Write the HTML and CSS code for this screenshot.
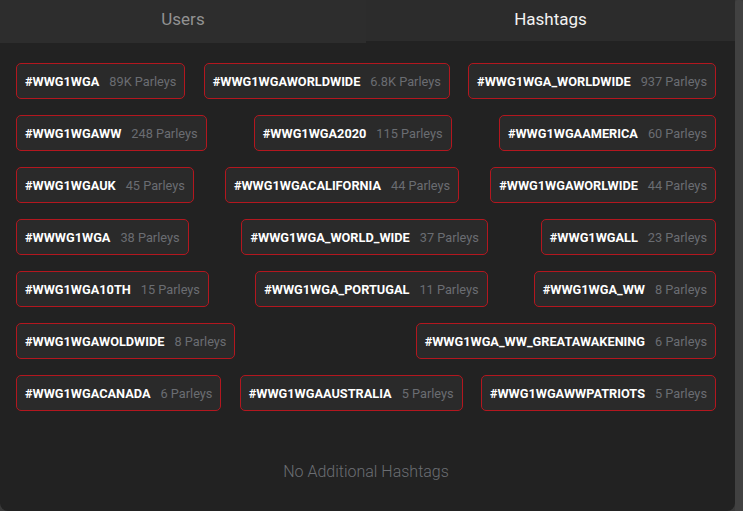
FILE: index.html
```html
<!DOCTYPE html>
<html>
<head>
<meta charset="utf-8">
<link rel="stylesheet" href="styles.css">
</head>
<body>
<div class="frame">
  <div class="panel">
    <div class="tabs">
      <div class="tab">Users</div>
      <div class="tab active">Hashtags</div>
    </div>
    <div class="content">
      <div class="row">
        <div class="tag"><span class="name">#WWG1WGA</span><span class="count">89K Parleys</span></div>
        <div class="tag"><span class="name">#WWG1WGAWORLDWIDE</span><span class="count">6.8K Parleys</span></div>
        <div class="tag"><span class="name">#WWG1WGA_WORLDWIDE</span><span class="count">937 Parleys</span></div>
      </div>
      <div class="row">
        <div class="tag"><span class="name">#WWG1WGAWW</span><span class="count">248 Parleys</span></div>
        <div class="tag"><span class="name">#WWG1WGA2020</span><span class="count">115 Parleys</span></div>
        <div class="tag"><span class="name">#WWG1WGAAMERICA</span><span class="count">60 Parleys</span></div>
      </div>
      <div class="row">
        <div class="tag"><span class="name">#WWG1WGAUK</span><span class="count">45 Parleys</span></div>
        <div class="tag"><span class="name">#WWG1WGACALIFORNIA</span><span class="count">44 Parleys</span></div>
        <div class="tag"><span class="name">#WWG1WGAWORLWIDE</span><span class="count">44 Parleys</span></div>
      </div>
      <div class="row">
        <div class="tag"><span class="name">#WWWG1WGA</span><span class="count">38 Parleys</span></div>
        <div class="tag"><span class="name">#WWG1WGA_WORLD_WIDE</span><span class="count">37 Parleys</span></div>
        <div class="tag"><span class="name">#WWG1WGALL</span><span class="count">23 Parleys</span></div>
      </div>
      <div class="row">
        <div class="tag"><span class="name">#WWG1WGA10TH</span><span class="count">15 Parleys</span></div>
        <div class="tag"><span class="name">#WWG1WGA_PORTUGAL</span><span class="count">11 Parleys</span></div>
        <div class="tag"><span class="name">#WWG1WGA_WW</span><span class="count">8 Parleys</span></div>
      </div>
      <div class="row">
        <div class="tag"><span class="name">#WWG1WGAWOLDWIDE</span><span class="count">8 Parleys</span></div>
        <div class="tag"><span class="name">#WWG1WGA_WW_GREATAWAKENING</span><span class="count">6 Parleys</span></div>
      </div>
      <div class="row">
        <div class="tag"><span class="name">#WWG1WGACANADA</span><span class="count">6 Parleys</span></div>
        <div class="tag"><span class="name">#WWG1WGAAUSTRALIA</span><span class="count">5 Parleys</span></div>
        <div class="tag"><span class="name">#WWG1WGAWWPATRIOTS</span><span class="count">5 Parleys</span></div>
      </div>
      <div class="empty">No Additional Hashtags</div>
    </div>
  </div>
  <div class="scrollbar"></div>
</div>
</body>
</html>
```

FILE: styles.css
```css
html, body {
  margin: 0;
  padding: 0;
  background: #232323;
  height: 511px;
  overflow: hidden;
}

body {
  font-family: Roboto, "Liberation Sans", sans-serif;
}

.frame {
  display: flex;
  width: 743px;
  height: 511px;
  background: #3a3a3a;
}

.panel {
  width: 735px;
  height: 511px;
  background: #222222;
  border-radius: 0 0 8px 8px;
  display: flex;
  flex-direction: column;
}

.scrollbar {
  width: 8px;
  height: 511px;
  background: #414141;
  border-radius: 3px 3px 0 0;
}

.tabs {
  display: flex;
  align-items: flex-start;
  background: #222222;
}

.tab {
  flex: 0 0 366px;
  height: 43px;
  background: #2d2d2d;
  color: #929292;
  font-size: 17px;
  font-weight: 400;
  text-align: center;
  line-height: 38px;
}

.tab.active {
  flex: 1 1 auto;
  height: 41px;
  color: #f2f2f2;
  background: #2c2c2c;
}

.content {
  padding: 22px 19px 0 16px;
  display: flex;
  flex-direction: column;
  gap: 16px;
  margin-top: -2px;
}

.row {
  display: flex;
  justify-content: space-between;
}

.tag {
  box-sizing: border-box;
  height: 36px;
  border: 1px solid #b3171f;
  border-radius: 5px;
  background: #2a2a2a;
  padding: 0 8px;
  display: flex;
  align-items: center;
  gap: 10px;
  font-size: 12.75px;
}

.name {
  color: #ffffff;
  font-weight: 700;
}

.count {
  color: #6a6d72;
}

.empty {
  margin-top: 35px;
  text-align: center;
  color: #6b6e73;
  font-size: 16px;
  font-weight: 300;
}
```
